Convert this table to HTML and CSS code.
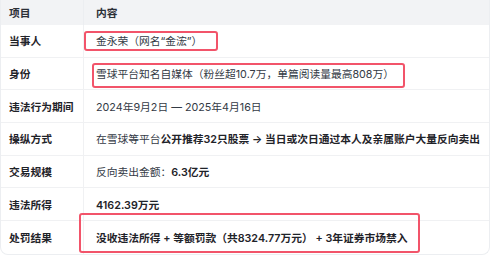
FILE: index.html
```html
<!DOCTYPE html>
<html lang="zh">
<head>
<meta charset="utf-8">
<link rel="stylesheet" href="styles.css">
</head>
<body>
<div class="wrap">
  <div class="table">
    <div class="cell head key">项目</div>
    <div class="cell head val">内容</div>

    <div class="cell key">当事人</div>
    <div class="cell val">金永荣（网名“金浤”）</div>

    <div class="cell key">身份</div>
    <div class="cell val">雪球平台知名自媒体（粉丝超10.7万，单篇阅读量最高808万）</div>

    <div class="cell key">违法行为期间</div>
    <div class="cell val">2024年9月2日 — 2025年4月16日</div>

    <div class="cell key">操纵方式</div>
    <div class="cell val">在雪球等平台<b>公开推荐32只股票 → 当日或次日通过本人及亲属账户大量反向卖出</b></div>

    <div class="cell key">交易规模</div>
    <div class="cell val">反向卖出金额：<b>6.3亿元</b></div>

    <div class="cell key">违法所得</div>
    <div class="cell val"><b>4162.39万元</b></div>

    <div class="cell key last">处罚结果</div>
    <div class="cell val last"><b>没收违法所得 + 等额罚款（共8324.77万元） + 3年证券市场禁入</b></div>
  </div>
  <div class="mark mark1"></div>
  <div class="mark mark2"></div>
  <div class="mark mark3"></div>
</div>
</body>
</html>
```

FILE: styles.css
```css
html, body {
  margin: 0;
  padding: 0;
  background: #ffffff;
}
body {
  font-family: Inter, "Noto Sans CJK SC", sans-serif;
  font-size: 10.75px;
  color: #333a45;
}
.wrap {
  position: relative;
  width: 490px;
}
.table {
  display: grid;
  grid-template-columns: 83px 1fr;
  grid-template-rows: 25px repeat(7, 32.7px);
  border: 1px solid #eceef1;
  border-top: none;
  border-radius: 0 0 8px 8px;
  overflow: hidden;
}
.cell {
  display: flex;
  align-items: center;
  border-bottom: 1px solid #f0f1f3;
  white-space: nowrap;
}
.cell.last {
  border-bottom: none;
}
.key {
  padding-left: 8px;
  font-weight: 600;
  color: #1f2329;
  border-right: 1px solid #f0f1f3;
}
.val {
  padding-left: 12px;
}
.head {
  background: #f2f3f5;
  font-weight: 600;
  color: #2b2f36;
  border-bottom: none;
}
.head.key {
  border-right: 1px solid #eceef1;
}
b {
  font-weight: 600;
  color: #1f2329;
}
.mark {
  position: absolute;
  border: 2px solid #f2546a;
  border-radius: 3px;
  box-sizing: border-box;
}
.mark1 { left: 84px; top: 31px; width: 134px; height: 20px; }
.mark2 { left: 92px; top: 63px; width: 313px; height: 25px; }
.mark3 { left: 79px; top: 213px; width: 341px; height: 40px; }
```
